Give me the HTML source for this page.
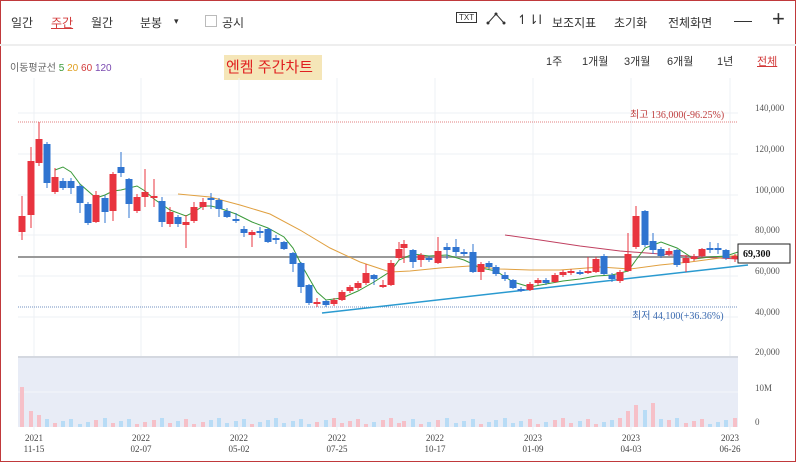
<!DOCTYPE html>
<html><head><meta charset="utf-8"><style>
body{margin:0;width:796px;height:462px;overflow:hidden;background:#fff;font-family:"Liberation Sans","Noto Sans CJK KR",sans-serif}
.frame{position:absolute;left:0;top:0;width:794px;height:460px;border:1px solid #c0393b}
.t{position:absolute;font-size:12px;color:#333;white-space:nowrap}
</style></head><body>
<div class="frame"></div>
<div class="t" style="left:11px;top:14px">일간</div>
<div class="t" style="left:51px;top:14px;color:#d23a3a;text-decoration:underline">주간</div>
<div class="t" style="left:91px;top:14px">월간</div>
<div class="t" style="left:140px;top:14px">분봉</div>
<div class="t" style="left:174px;top:16px;font-size:9px">▾</div>
<div style="position:absolute;left:205px;top:15px;width:10px;height:10px;border:1px solid #bbb"></div>
<div class="t" style="left:222px;top:14px">공시</div>
<div class="t" style="left:456px;top:12px;font-size:8px;border:1px solid #333;padding:0 2px;line-height:9px">TXT</div>
<svg style="position:absolute;left:486px;top:11px" width="20" height="14"><path d="M2 12 L10 3 L18 12" fill="none" stroke="#333" stroke-width="1"/><circle cx="2" cy="12" r="1.5" fill="#333"/><circle cx="10" cy="3" r="1.5" fill="#333"/><circle cx="18" cy="12" r="1.5" fill="#333"/></svg>
<div class="t" style="left:517px;top:12px;font-size:13px">↿⇂l</div>
<div class="t" style="left:552px;top:14px">보조지표</div>
<div class="t" style="left:614px;top:14px">초기화</div>
<div class="t" style="left:668px;top:14px">전체화면</div>
<div style="position:absolute;left:734px;top:21px;width:18px;height:1px;background:#333"></div>
<div class="t" style="left:772px;top:6px;font-size:22px;font-weight:300">+</div>
<div style="position:absolute;left:0;top:44px;width:796px;height:2px;background:#eee"></div>
<div class="t" style="left:10px;top:59px;font-size:10px;color:#666">이동평균선 <span style="color:#3a9a3a">5</span> <span style="color:#e0a020">20</span> <span style="color:#d23a3a">60</span> <span style="color:#7a4ab0">120</span></div>
<div class="t" style="left:224px;top:55px;width:96px;height:25px;background:#f5e6b8;color:#e02020;font-size:15px;line-height:25px;padding-left:2px">엔켐 주간차트</div>
<div class="t" style="left:546px;top:53px;font-size:11px">1주</div>
<div class="t" style="left:582px;top:53px;font-size:11px">1개월</div>
<div class="t" style="left:624px;top:53px;font-size:11px">3개월</div>
<div class="t" style="left:667px;top:53px;font-size:11px">6개월</div>
<div class="t" style="left:717px;top:53px;font-size:11px">1년</div>
<div class="t" style="left:757px;top:53px;font-size:11px;color:#d23a3a;text-decoration:underline">전체</div>
<svg style="position:absolute;left:0;top:0" width="796" height="462" font-family="Liberation Serif,serif">
<g stroke="#eef0f4" stroke-width="1">
<line x1="34" y1="78" x2="34" y2="430"/><line x1="141" y1="78" x2="141" y2="430"/><line x1="239" y1="78" x2="239" y2="430"/><line x1="337" y1="78" x2="337" y2="430"/><line x1="435" y1="78" x2="435" y2="430"/><line x1="533" y1="78" x2="533" y2="430"/><line x1="631" y1="78" x2="631" y2="430"/><line x1="730" y1="78" x2="730" y2="430"/>
<line x1="18" y1="113" x2="738" y2="113"/><line x1="18" y1="154" x2="738" y2="154"/><line x1="18" y1="195" x2="738" y2="195"/><line x1="18" y1="235" x2="738" y2="235"/><line x1="18" y1="276" x2="738" y2="276"/><line x1="18" y1="317" x2="738" y2="317"/>
</g>
<g font-size="9" fill="#555"><text x="755" y="111">140,000</text><text x="755" y="152">120,000</text><text x="755" y="193">100,000</text><text x="755" y="233">80,000</text><text x="755" y="274">60,000</text><text x="755" y="315">40,000</text><text x="755" y="355">20,000</text><text x="755" y="391">10M</text><text x="755" y="425">0</text></g>
<line x1="18" y1="122" x2="738" y2="122" stroke="#e08080" stroke-dasharray="1,1"/>
<line x1="18" y1="307" x2="738" y2="307" stroke="#7090c0" stroke-dasharray="1,1"/>
<text x="630" y="118" font-size="10" fill="#c04040">최고 136,000(-96.25%)</text>
<text x="632" y="319" font-size="10" fill="#3a6ab0">최저 44,100(+36.36%)</text>
<line x1="18" y1="257" x2="738" y2="257" stroke="#999" stroke-width="2"/>
<rect x="18" y="357" width="720" height="70" fill="#e8ecf6"/>
<line x1="18" y1="357" x2="738" y2="357" stroke="#d4d8e0" stroke-width="2"/>
<line x1="18" y1="392" x2="738" y2="392" stroke="#f4f6fa"/>
<polyline fill="none" stroke="#c04060" stroke-width="1" points="505,235 540,240 580,246 620,251 660,254 700,257 738,259"/>
<polyline fill="none" stroke="#e0a040" stroke-width="1" points="178,194 210,197 240,205 270,214 300,230 330,248 360,262 390,272 410,271 440,268 470,266 500,269 530,270 560,270 600,267 630,269 660,265 690,262 720,258 738,255"/>
<polyline fill="none" stroke="#3a9a3a" stroke-width="1" points="55,170 63,167 71,172 80,184 96,198 105,195 113,191 121,190 137,186 145,191 154,199 170,210 186,216 194,212 203,206 211,206 219,208 236,214 252,222 268,228 284,237 293,248 301,264 317,292 326,300 342,298 358,291 374,282 391,271 399,260 413,254 429,256 447,255 464,260 481,268 496,271 513,282 530,287 546,284 563,281 580,279 596,276 612,275 628,271 636,260 645,248 661,242 677,248 694,259 710,257 726,256 738,252"/>
<line x1="322" y1="313" x2="748" y2="265" stroke="#2a9ad0" stroke-width="1.5"/>
<g id="c"></g>
<rect x="738" y="244" width="52" height="19" fill="#fff" stroke="#222"/>
<text x="743" y="257" font-size="10" font-weight="bold" fill="#111">69,300</text>
<g font-size="9" fill="#444" text-anchor="middle"><text x="34" y="441">2021</text><text x="34" y="452">11-15</text><text x="141" y="441">2022</text><text x="141" y="452">02-07</text><text x="239" y="441">2022</text><text x="239" y="452">05-02</text><text x="337" y="441">2022</text><text x="337" y="452">07-25</text><text x="435" y="441">2022</text><text x="435" y="452">10-17</text><text x="533" y="441">2023</text><text x="533" y="452">01-09</text><text x="631" y="441">2023</text><text x="631" y="452">04-03</text><text x="730" y="441">2023</text><text x="730" y="452">06-26</text></g>
</svg>
<script>
var d=[[22,216,232,196,240,1],[31,161,215,147,228,1],[39,139,163,122,166,1],[47,144,183,142,188,0],[55,177,192,168,194,1],[63,181,188,178,190,0],[71,181,188,178,194,0],[80,186,203,184,213,0],[88,204,223,202,225,0],[96,195,222,191,223,1],[105,198,212,195,223,0],[113,174,211,172,221,1],[121,167,173,152,177,0],[129,179,204,178,218,0],[137,197,211,194,213,1],[145,192,197,169,207,1],[154,196,198,179,207,1],[162,201,222,197,227,0],[170,212,224,207,227,1],[178,217,224,215,227,0],[186,222,225,215,248,1],[194,207,221,202,223,1],[203,202,207,198,210,1],[211,198,200,193,209,0],[219,200,209,198,217,0],[227,211,217,208,218,0],[236,219,221,213,223,0],[244,229,233,226,237,0],[252,232,235,230,247,1],[260,231,233,227,238,0],[268,229,242,228,243,0],[276,238,240,235,244,0],[284,242,249,241,250,0],[293,253,264,252,272,0],[301,263,287,262,293,0],[309,285,303,284,305,0],[317,302,303,298,307,1],[326,301,305,300,307,0],[334,300,304,298,306,1],[342,292,300,290,301,1],[350,287,291,285,293,1],[358,283,288,281,290,1],[366,273,283,264,285,1],[374,275,279,274,285,0],[383,285,287,280,288,1],[391,263,285,260,286,1],[399,249,258,242,260,1],[404,244,248,240,263,1],[413,250,262,249,268,0],[421,255,260,253,267,1],[429,258,260,256,262,0],[438,251,263,237,264,1],[447,247,250,243,259,0],[456,247,252,239,256,0],[464,252,253,249,256,0],[473,252,272,244,273,0],[481,264,272,262,280,1],[489,263,267,261,269,0],[496,267,274,265,276,0],[505,275,279,272,281,0],[513,280,288,279,289,0],[521,289,291,287,292,0],[530,284,290,282,291,1],[538,280,283,278,285,1],[546,280,283,278,285,0],[555,275,282,273,283,1],[563,272,275,270,277,1],[571,271,273,269,275,1],[580,272,273,270,275,0],[588,271,272,257,274,1],[596,259,272,257,273,1],[604,256,274,254,275,0],[612,275,279,273,282,0],[620,272,281,270,283,1],[628,254,271,233,272,1],[636,216,247,206,249,1],[645,211,245,210,247,0],[653,241,250,233,254,0],[661,249,256,247,258,0],[669,251,254,248,256,1],[677,250,265,249,267,0],[686,258,263,255,272,1],[694,257,259,254,261,1],[702,249,256,248,257,1],[710,248,250,242,253,0],[718,248,250,243,254,0],[726,250,258,249,260,0],[735,256,259,254,262,1]];
var sp={628:16,636:22,645:17,653:24,661:8};
var s='';
d.forEach(function(c,i){var col=c[5]?'#e8343f':'#2f74d0';var t=Math.min(c[1],c[2]),b=Math.max(c[1],c[2]);if(b-t<2)b=t+2;
s+='<line x1="'+c[0]+'" y1="'+c[3]+'" x2="'+c[0]+'" y2="'+c[4]+'" stroke="'+col+'"/><rect x="'+(c[0]-3.5)+'" y="'+t+'" width="7" height="'+(b-t)+'" fill="'+col+'"/>';
var v=3+((i*37)%7);if(i<4)v=[40,16,12,8][i];if(sp[c[0]])v=sp[c[0]];
var vc=c[5]?'#f6c0c8':'#b8dcf6';if(c[0]==653)vc='#f6c0c8';
s+='<rect x="'+(c[0]-2)+'" y="'+(427-v)+'" width="4" height="'+v+'" fill="'+vc+'"/>';});
document.getElementById('c').innerHTML=s;
</script>
</body></html>
